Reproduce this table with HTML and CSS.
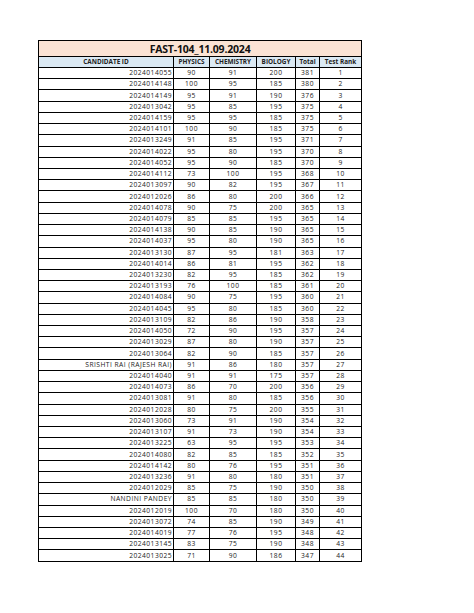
FILE: index.html
```html
<!DOCTYPE html>
<html>
<head>
<meta charset="utf-8">
<link rel="stylesheet" href="styles.css">
</head>
<body>
<div class="page">
<table class="sheet">
<colgroup>
<col class="c-id"><col class="c-phy"><col class="c-chem"><col class="c-bio"><col class="c-tot"><col class="c-rank">
</colgroup>
<thead>
<tr class="title"><th colspan="6">FAST-104_11.09.2024</th></tr>
<tr class="head"><th>CANDIDATE ID</th><th>PHYSICS</th><th>CHEMISTRY</th><th>BIOLOGY</th><th>Total</th><th>Test Rank</th></tr>
</thead>
<tbody>
<tr><td class="id">2024014055</td><td>90</td><td>91</td><td>200</td><td>381</td><td>1</td></tr>
<tr><td class="id">2024014148</td><td>100</td><td>95</td><td>185</td><td>380</td><td>2</td></tr>
<tr><td class="id">2024014149</td><td>95</td><td>91</td><td>190</td><td>376</td><td>3</td></tr>
<tr><td class="id">2024013042</td><td>95</td><td>85</td><td>195</td><td>375</td><td>4</td></tr>
<tr><td class="id">2024014159</td><td>95</td><td>95</td><td>185</td><td>375</td><td>5</td></tr>
<tr><td class="id">2024014101</td><td>100</td><td>90</td><td>185</td><td>375</td><td>6</td></tr>
<tr><td class="id">2024013249</td><td>91</td><td>85</td><td>195</td><td>371</td><td>7</td></tr>
<tr><td class="id">2024014022</td><td>95</td><td>80</td><td>195</td><td>370</td><td>8</td></tr>
<tr><td class="id">2024014052</td><td>95</td><td>90</td><td>185</td><td>370</td><td>9</td></tr>
<tr><td class="id">2024014112</td><td>73</td><td>100</td><td>195</td><td>368</td><td>10</td></tr>
<tr><td class="id">2024013097</td><td>90</td><td>82</td><td>195</td><td>367</td><td>11</td></tr>
<tr><td class="id">2024012026</td><td>86</td><td>80</td><td>200</td><td>366</td><td>12</td></tr>
<tr><td class="id">2024014078</td><td>90</td><td>75</td><td>200</td><td>365</td><td>13</td></tr>
<tr><td class="id">2024014079</td><td>85</td><td>85</td><td>195</td><td>365</td><td>14</td></tr>
<tr><td class="id">2024014138</td><td>90</td><td>85</td><td>190</td><td>365</td><td>15</td></tr>
<tr><td class="id">2024014037</td><td>95</td><td>80</td><td>190</td><td>365</td><td>16</td></tr>
<tr><td class="id">2024013130</td><td>87</td><td>95</td><td>181</td><td>363</td><td>17</td></tr>
<tr><td class="id">2024014014</td><td>86</td><td>81</td><td>195</td><td>362</td><td>18</td></tr>
<tr><td class="id">2024013230</td><td>82</td><td>95</td><td>185</td><td>362</td><td>19</td></tr>
<tr><td class="id">2024013193</td><td>76</td><td>100</td><td>185</td><td>361</td><td>20</td></tr>
<tr><td class="id">2024014084</td><td>90</td><td>75</td><td>195</td><td>360</td><td>21</td></tr>
<tr><td class="id">2024014045</td><td>95</td><td>80</td><td>185</td><td>360</td><td>22</td></tr>
<tr><td class="id">2024013109</td><td>82</td><td>86</td><td>190</td><td>358</td><td>23</td></tr>
<tr><td class="id">2024014050</td><td>72</td><td>90</td><td>195</td><td>357</td><td>24</td></tr>
<tr><td class="id">2024013029</td><td>87</td><td>80</td><td>190</td><td>357</td><td>25</td></tr>
<tr><td class="id">2024013064</td><td>82</td><td>90</td><td>185</td><td>357</td><td>26</td></tr>
<tr><td class="id">SRISHTI RAI (RAJESH RAI)</td><td>91</td><td>86</td><td>180</td><td>357</td><td>27</td></tr>
<tr><td class="id">2024014040</td><td>91</td><td>91</td><td>175</td><td>357</td><td>28</td></tr>
<tr><td class="id">2024014073</td><td>86</td><td>70</td><td>200</td><td>356</td><td>29</td></tr>
<tr><td class="id">2024013081</td><td>91</td><td>80</td><td>185</td><td>356</td><td>30</td></tr>
<tr><td class="id">2024012028</td><td>80</td><td>75</td><td>200</td><td>355</td><td>31</td></tr>
<tr><td class="id">2024013060</td><td>73</td><td>91</td><td>190</td><td>354</td><td>32</td></tr>
<tr><td class="id">2024013107</td><td>91</td><td>73</td><td>190</td><td>354</td><td>33</td></tr>
<tr><td class="id">2024013225</td><td>63</td><td>95</td><td>195</td><td>353</td><td>34</td></tr>
<tr><td class="id">2024014080</td><td>82</td><td>85</td><td>185</td><td>352</td><td>35</td></tr>
<tr><td class="id">2024014142</td><td>80</td><td>76</td><td>195</td><td>351</td><td>36</td></tr>
<tr><td class="id">2024013236</td><td>91</td><td>80</td><td>180</td><td>351</td><td>37</td></tr>
<tr><td class="id">2024012029</td><td>85</td><td>75</td><td>190</td><td>350</td><td>38</td></tr>
<tr><td class="id">NANDINI PANDEY</td><td>85</td><td>85</td><td>180</td><td>350</td><td>39</td></tr>
<tr><td class="id">2024012019</td><td>100</td><td>70</td><td>180</td><td>350</td><td>40</td></tr>
<tr><td class="id">2024013072</td><td>74</td><td>85</td><td>190</td><td>349</td><td>41</td></tr>
<tr><td class="id">2024014019</td><td>77</td><td>76</td><td>195</td><td>348</td><td>42</td></tr>
<tr><td class="id">2024013145</td><td>83</td><td>75</td><td>190</td><td>348</td><td>43</td></tr>
<tr><td class="id">2024013025</td><td>71</td><td>90</td><td>186</td><td>347</td><td>44</td></tr>
</tbody>
</table>
</div>
</body>
</html>
```
FILE: styles.css
```css
html, body {
  margin: 0;
  padding: 0;
  background: #ffffff;
}
.page {
  padding: 40px 0 0 38px;
}
.sheet {
  border-collapse: collapse;
  table-layout: fixed;
  width: 323px;
  font-family: "Open Sans", "Noto Sans", sans-serif;
  color: #1a1a1a;
  border: 1.5px solid #000;
}
.c-id { width: 135px; }
.c-phy { width: 36px; }
.c-chem { width: 47px; }
.c-bio { width: 39px; }
.c-tot { width: 24px; }
.c-rank { width: 42px; }
.sheet th, .sheet td {
  border: 1px solid #000;
  padding: 0;
  text-align: center;
  white-space: nowrap;
  overflow: hidden;
  line-height: 10px;
}
.title th {
  background: #fbe3d4;
  height: 15px;
  font-size: 10.5px;
  font-weight: 700;
  letter-spacing: -0.2px;
  color: #111;
}
.head th {
  background: #dbe9f3;
  height: 10px;
  font-size: 6.4px;
  font-weight: 700;
  color: #222;
}
.sheet td {
  height: 10.22px;
  font-size: 6.7px;
  letter-spacing: 0.45px;
  color: #222;
}
.sheet td.id {
  text-align: right;
  padding-right: 1px;
}
```
